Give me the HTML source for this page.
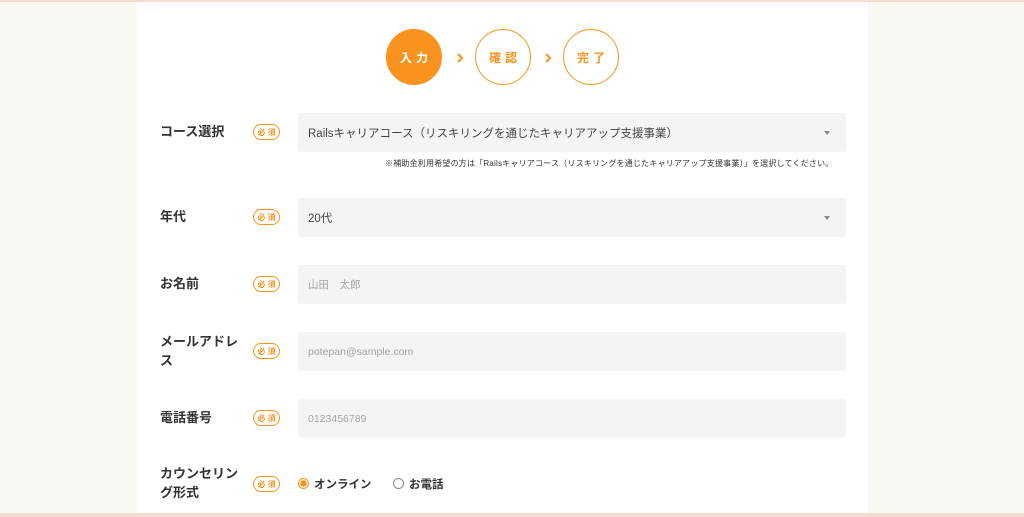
<!DOCTYPE html>
<html><head><meta charset="utf-8"><style>
*{margin:0;padding:0;box-sizing:border-box}
body{width:1024px;height:517px;overflow:hidden;background:#faf8f3;font-family:"Liberation Sans","Noto Sans CJK JP",sans-serif;position:relative}
.top{position:absolute;left:0;top:0;width:1024px;height:2px;background:#f8dccf}
.bot{position:absolute;left:0;top:513px;width:1024px;height:4px;background:#f3dccf}
.panel{position:absolute;left:137px;top:2px;width:731px;height:511px;background:#fff}
.c{position:absolute;width:56px;height:56px;border-radius:50%;border:1.5px solid #f7931e;color:#f7931e;font-size:12px;font-weight:bold;letter-spacing:4px;display:flex;align-items:center;justify-content:center;padding-left:4px}
.c.on{background:#f7931e;color:#fff}
.ch{position:absolute;top:52px}
.lab{position:absolute;left:160px;font-size:13px;font-weight:bold;color:#333;line-height:19px}
.req{position:absolute;left:253px;width:27px;height:16px;border:1.5px solid #f7931e;border-radius:8px;color:#f7931e;font-size:8px;font-weight:bold;display:flex;align-items:center;justify-content:center}
.in{position:absolute;left:298px;width:548px;height:39px;background:#f3f4f6;border-radius:3px;font-size:11.5px;color:#444;padding-left:10px;display:flex;align-items:center}
.in.ph{color:#a0a4aa;font-size:10.5px}
.arr{position:absolute;right:16px;top:18px;border:3px solid transparent;border-top:4px solid #888;}
.note{position:absolute;left:385px;top:158px;font-size:8px;color:#333;letter-spacing:0.2px}
.r{position:absolute;top:478px;width:11px;height:11px;border-radius:50%;border:1px solid #888}
.rt{position:absolute;top:476px;font-size:11.5px;font-weight:bold;color:#333}
</style></head><body>
<div class="top"></div><div class="bot"></div>
<div class="panel"></div>
<div class="c on" style="left:386px;top:29px">入力</div>
<svg class="ch" style="left:455px" width="10" height="12"><path d="M3 2 L7 6 L3 10" fill="none" stroke="#f7931e" stroke-width="2"/></svg>
<div class="c" style="left:475px;top:29px">確認</div>
<svg class="ch" style="left:543px" width="10" height="12"><path d="M3 2 L7 6 L3 10" fill="none" stroke="#f7931e" stroke-width="2"/></svg>
<div class="c" style="left:563px;top:29px">完了</div>

<div class="lab" style="top:122px">コース選択</div>
<div class="req" style="top:124px">必 須</div>
<div class="in" style="top:113px">Railsキャリアコース（リスキリングを通じたキャリアアップ支援事業）<span class="arr"></span></div>
<div class="note">※補助金利用希望の方は「Railsキャリアコース（リスキリングを通じたキャリアアップ支援事業）」を選択してください。</div>

<div class="lab" style="top:207px">年代</div>
<div class="req" style="top:209px">必 須</div>
<div class="in" style="top:198px">20代<span class="arr"></span></div>

<div class="lab" style="top:274px">お名前</div>
<div class="req" style="top:276px">必 須</div>
<div class="in ph" style="top:265px">山田　太郎</div>

<div class="lab" style="top:332px">メールアドレ<br>ス</div>
<div class="req" style="top:343px">必 須</div>
<div class="in ph" style="top:332px">potepan@sample.com</div>

<div class="lab" style="top:408px">電話番号</div>
<div class="req" style="top:410px">必 須</div>
<div class="in ph" style="top:399px">0123456789</div>

<div class="lab" style="top:464px">カウンセリン<br>グ形式</div>
<div class="req" style="top:476px">必 須</div>
<div class="r" style="left:298px;border-color:#f7931e;background:radial-gradient(circle,#f7931e 3px,#fff 3.5px)"></div>
<div class="rt" style="left:314px">オンライン</div>
<div class="r" style="left:393px"></div>
<div class="rt" style="left:409px">お電話</div>
</body></html>
